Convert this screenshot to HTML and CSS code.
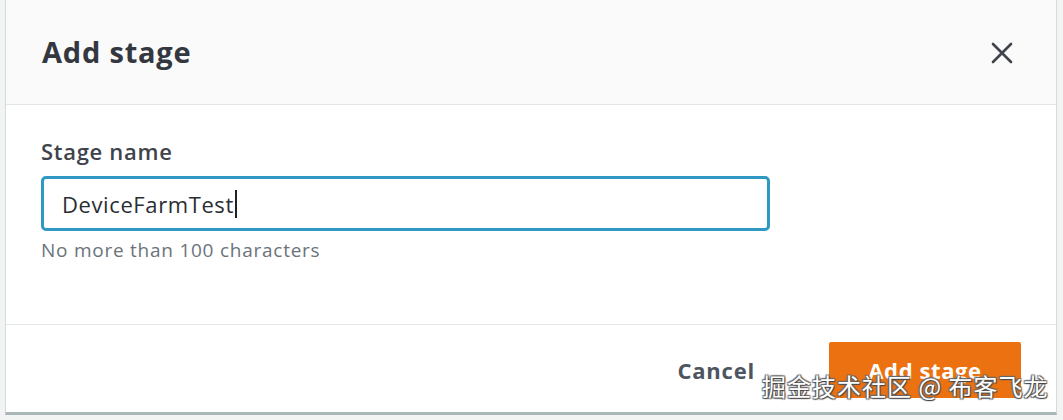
FILE: index.html
```html
<!DOCTYPE html>
<html>
<head>
<meta charset="utf-8">
<link rel="stylesheet" href="styles.css">
</head>
<body>
<div class="page">
  <div class="modal">
    <div class="modal-header">
      <h2 class="title">Add stage</h2>
      <button class="close" aria-label="Close">
        <svg width="24" height="24" viewBox="0 0 24 24"><path d="M3 3 L21 21 M21 3 L3 21" stroke="#3f434a" stroke-width="2.6" stroke-linecap="round" fill="none"/></svg>
      </button>
    </div>
    <div class="modal-body">
      <label class="label">Stage name</label>
      <div class="input"><span class="value">DeviceFarmTest</span><span class="caret"></span></div>
      <div class="hint">No more than 100 characters</div>
    </div>
    <div class="modal-footer">
      <button class="btn-link">Cancel</button>
      <button class="btn-primary">Add stage</button>
    </div>
  </div>
  <div class="watermark">掘金技术社区 @ 布客飞龙</div>
</div>
</body>
</html>
```

FILE: styles.css
```css
html, body {
  margin: 0;
  padding: 0;
  background: #f2f3f3;
  width: 1063px;
  height: 420px;
  overflow: hidden;
}
.page {
  position: relative;
  width: 1063px;
  height: 420px;
  font-family: "Open Sans", "Noto Sans", sans-serif;
}
.modal {
  margin-left: 5px;
  width: 1052px;
  height: 415px;
  background: #fff;
  border-left: 1px solid #d5dbdb;
  border-right: 1px solid #d5dbdb;
  border-bottom: 3px solid #aab7b8;
  display: flex;
  flex-direction: column;
  box-sizing: border-box;
}
.modal-header {
  height: 105px;
  background: #fafafa;
  border-bottom: 1px solid #e4e6e6;
  display: flex;
  align-items: center;
  justify-content: space-between;
  padding: 0 42px 0 36px;
  box-sizing: border-box;
}
.title {
  margin: 0;
  font-size: 29px;
  font-weight: 700;
  color: #33373f;
  letter-spacing: 0.8px;
  padding-bottom: 2px;
}
.close {
  border: 0;
  background: none;
  padding: 0;
  width: 24px;
  height: 24px;
  display: flex;
  margin-top: 2px;
}
.modal-body {
  height: 220px;
  padding: 31px 0 0 35px;
  box-sizing: border-box;
  display: flex;
  flex-direction: column;
  border-bottom: 1px solid #e6e8e8;
}
.label {
  font-size: 22px;
  font-weight: 600;
  color: #3e434b;
  line-height: 30px;
  margin-bottom: 10px;
  letter-spacing: 0.7px;
}
.input {
  width: 729px;
  height: 55px;
  border: 3px solid #2f99c4;
  border-radius: 5px;
  box-sizing: border-box;
  display: flex;
  align-items: center;
  padding-left: 18px;
}
.value {
  font-size: 22px;
  color: #2a2e33;
  letter-spacing: 0.6px;
}
.caret {
  width: 2px;
  height: 28px;
  background: #222;
  margin-left: 1px;
}
.hint {
  margin-top: 6px;
  font-size: 19px;
  color: #6b737b;
  line-height: 26px;
  letter-spacing: 0.75px;
}
.modal-footer {
  flex: 1;
  display: flex;
  justify-content: flex-end;
  align-items: flex-start;
  padding: 17px 35px 0 0;
  box-sizing: border-box;
}
.btn-link {
  border: 0;
  background: none;
  font-family: inherit;
  font-size: 22px;
  font-weight: 700;
  color: #4c5560;
  height: 56px;
  padding: 0;
  margin-right: 74px;
  letter-spacing: 0.8px;
}
.btn-primary {
  border: 0;
  background: #ec7211;
  color: #fff;
  font-family: inherit;
  font-size: 22px;
  font-weight: 700;
  width: 192px;
  height: 56px;
  border-radius: 2px;
  letter-spacing: 0.6px;
}
.watermark {
  position: absolute;
  left: 762px;
  top: 371px;
  font-family: "Noto Sans CJK SC", sans-serif;
  font-size: 24px;
  line-height: 30px;
  color: #fff;
  letter-spacing: 1px;
  text-shadow: 1px 1px 1px #444, -1px -1px 1px #666, 1px -1px 1px #666, -1px 1px 1px #666;
}
```
